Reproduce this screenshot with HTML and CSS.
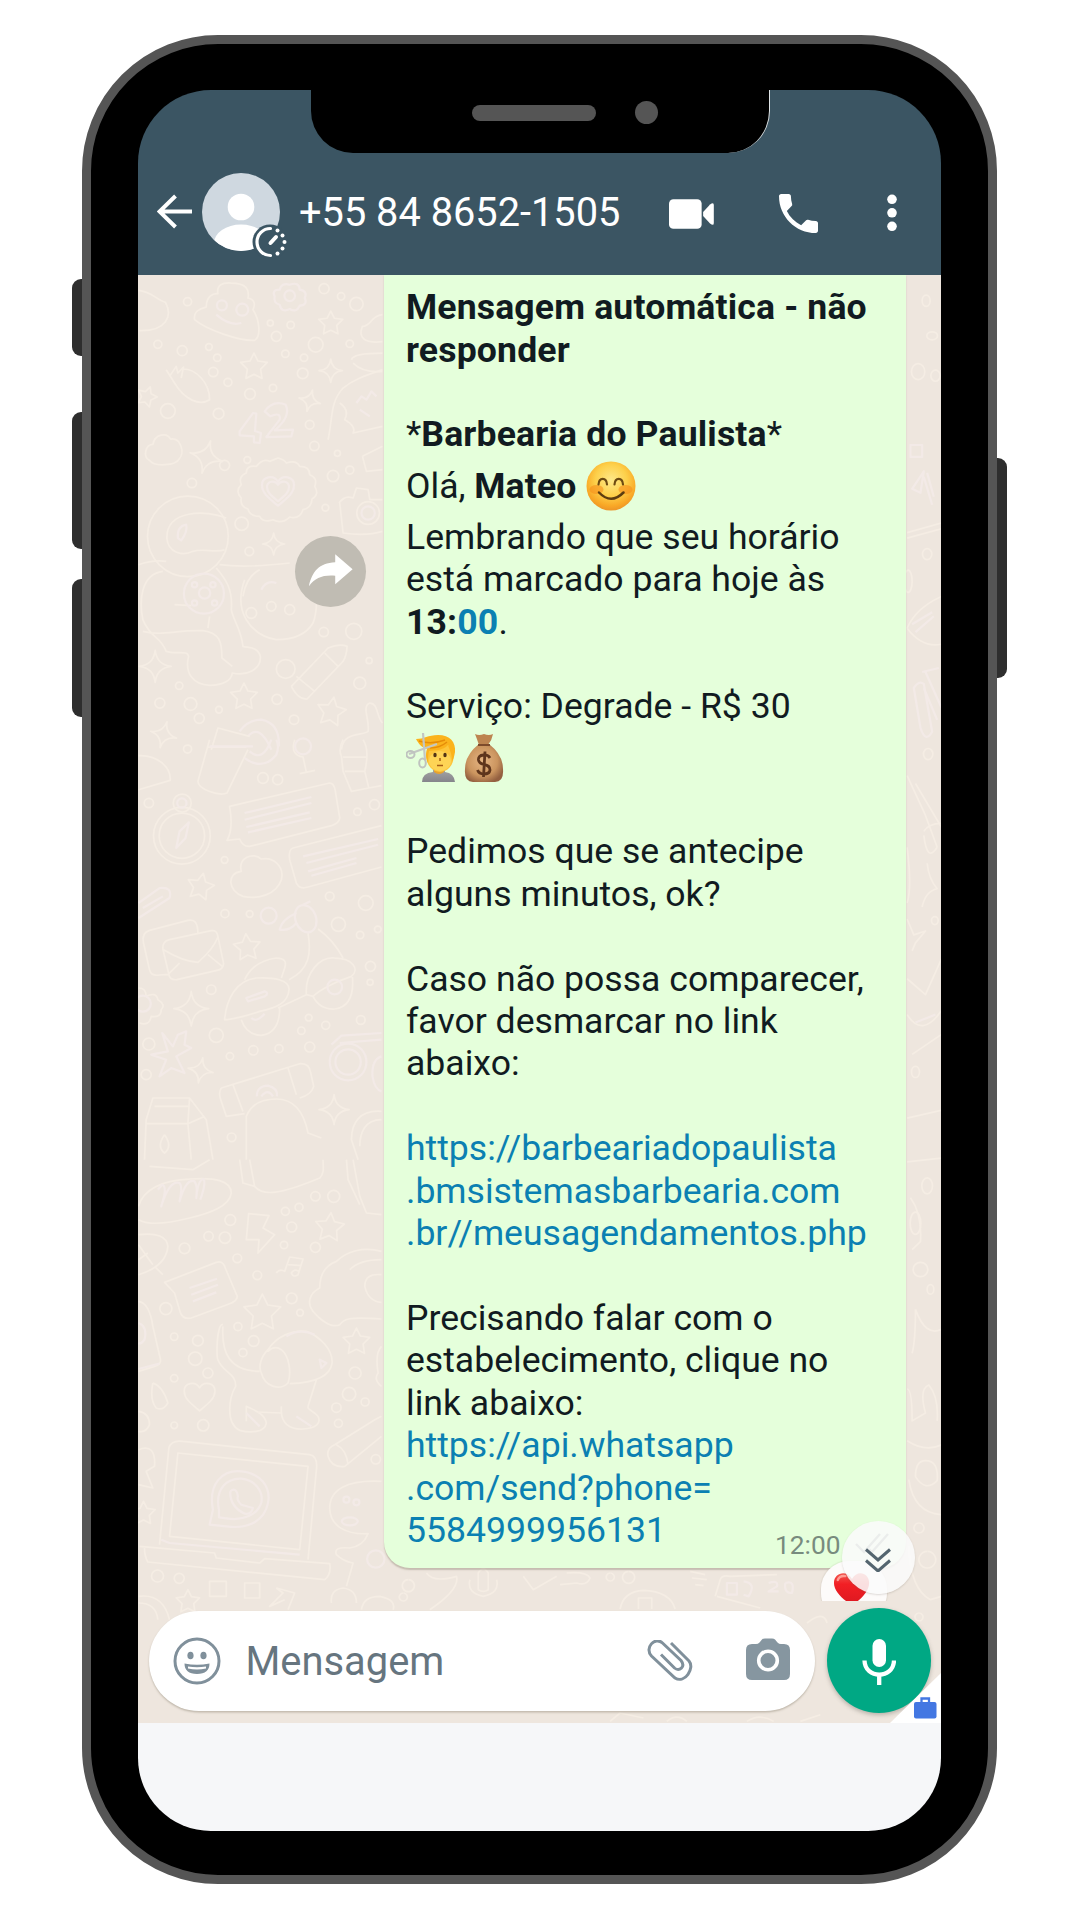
FILE: index.html
```html
<!DOCTYPE html>
<html lang="pt-BR">
<head>
<meta charset="utf-8">
<title>+55 84 8652-1505</title>
<link rel="stylesheet" href="styles.css">
</head>
<body>
<main class="phone">
  <span class="side-key side-key-a"></span>
  <span class="side-key side-key-b"></span>
  <span class="side-key side-key-c"></span>
  <span class="side-key side-key-power"></span>

  <div class="screen">
    <header class="topbar">
      <svg class="back" viewBox="0 0 36 36"><path d="M35 17.500H3M18.500 2 2.500 17.500 18.500 33" fill="none" stroke="#fff" stroke-width="4"/></svg>
      <div class="avatar">
        <svg viewBox="0 0 86 86">
          <defs><clipPath id="av"><circle cx="39" cy="39" r="39"/></clipPath></defs>
          <g clip-path="url(#av)"><rect width="78" height="78" fill="#cfd8e0"/><circle cx="39" cy="34" r="13.300" fill="#fff"/><ellipse cx="39" cy="70" rx="27" ry="18.500" fill="#fff"/></g>
          <circle cx="68" cy="69" r="17.500" fill="#3b5563"/>
          <path d="M68.500 55.500a13.500 13.500 0 1 0 0 27" fill="none" stroke="#fff" stroke-width="3.200" stroke-linecap="round"/>
          <path d="M68.500 70 74 64" stroke="#fff" stroke-width="4" stroke-linecap="round"/>
          <g fill="#fff"><circle cx="75.500" cy="57.500" r="2"/><circle cx="80.500" cy="62.500" r="2"/><circle cx="82.500" cy="69" r="2"/><circle cx="80.500" cy="75.500" r="2"/><circle cx="75.500" cy="80.500" r="2"/></g>
        </svg>
      </div>
      <h1 class="contact">+55 84 8652-1505</h1>
      <svg class="video" viewBox="0 0 46 30"><rect width="33" height="30" rx="4.500" fill="#fff"/><path d="M34.500 13 41.500 5.500Q45.300 2.500 45.300 6V24Q45.300 27.500 41.500 24.500L34.500 17Z" fill="#fff"/></svg>
      <svg class="call" viewBox="3 3 18 18"><path d="M6.620 10.790c1.440 2.830 3.760 5.140 6.590 6.590l2.200-2.200c.27-.27.67-.36 1.020-.24 1.120.37 2.330.57 3.570.57.55 0 1 .45 1 1V20c0 .55-.45 1-1 1-9.390 0-17-7.610-17-17 0-.55.45-1 1-1h3.500c.55 0 1 .45 1 1 0 1.250.2 2.450.57 3.570.11.35.03.74-.25 1.020l-2.200 2.200z" fill="#fff"/></svg>
      <svg class="dots" viewBox="0 0 10 38"><g fill="#fff"><circle cx="5" cy="5.300" r="4.800"/><circle cx="5" cy="18.800" r="4.800"/><circle cx="5" cy="32.300" r="4.800"/></g></svg>
    </header>

    <section class="chat">
      <svg class="wallpaper" viewBox="138.500 275.300 802 1448.700" preserveAspectRatio="none">
        <defs>
          <path id="star" d="M0-10 3-4 10-3 5 2 6 9 0 6-6 9-5 2-10-3-3-4Z"/>
          <path id="spark" d="M0-10Q1-1 10 0Q1 1 0 10Q-1 1-10 0Q-1-1 0-10Z"/>
          <path id="heart" d="M0 9C-6 4-10 1-10-4C-10-9-3-11 0-6C3-11 10-9 10-4C10 1 6 4 0 9Z"/>
          <path id="cloud" d="M-8 6C-12 4-10-3-6-3C-5-9 2-10 4-6C10-7 12 2 9 5C7 9-5 10-8 6Z"/>
        </defs>
        <g transform="translate(60 270) scale(.33333)">
          <path d="M237 62C275 65 290 90 318 98C340 140 320 185 240 183"/>
          <path d="M405 150C400 120 430 115 440 112C440 80 460 70 475 72C470 45 490 38 515 40C560 40 570 60 565 85C590 90 585 110 580 120C600 150 605 200 585 212C540 215 440 180 405 150Z"/>
          <g class="lilac"><circle cx="487" cy="107" r="15"/><circle cx="548" cy="120" r="18"/><path d="M470 135Q510 170 545 160"/><circle cx="690" cy="78" r="16"/><path d="M645 80Q635 60 660 60Q665 38 690 45Q718 35 720 60Q745 65 735 85Q745 105 720 108Q710 130 690 118Q665 130 660 105Q640 100 645 80Z"/></g>
          <use href="#star" transform="translate(813 160) scale(3.600)"/><use href="#star" transform="translate(583 290) scale(4)"/><use href="#star" transform="translate(262 380) rotate(20) scale(3)"/>
          <use href="#spark" transform="translate(813 303) scale(3.500)"/><use href="#spark" transform="translate(750 393) rotate(15) scale(3.300)"/><use href="#spark" transform="translate(440 562) rotate(15) scale(5)"/><use href="#spark" transform="translate(642 823) scale(3.300)"/><use href="#spark" transform="translate(287 1190) scale(4.800)"/><use href="#spark" transform="translate(312 1395) rotate(15) scale(4)"/>
          <path d="M968 135C930 140 935 170 908 170C895 200 910 222 968 216M875 270Q880 250 968 250M880 280Q910 310 968 305"/>
          <path d="M365 298C410 295 450 340 450 390C420 410 375 390 345 340L320 300M330 320 350 290 355 310 372 292 365 325"/>
          <path d="M805 510C820 440 810 400 850 355C880 330 910 320 968 300M840 400Q870 420 855 450Q890 470 880 490L968 470"/>
          <g class="lilac"><path d="M890 400 905 380 920 390 935 365 950 380M900 420 930 440"/><path d="M540 485 580 430 590 432 586 484 604 490 600 520 583 518 583 500 540 497Z"/><path d="M615 425Q640 390 678 405Q695 440 645 482L700 480 695 500 620 502 660 450Q665 425 632 440Z"/></g>
          <use href="#cloud" transform="translate(312 540) scale(5.300)"/>
          <path d="M655 565Q675 570 680 580Q710 570 720 590Q750 590 750 615Q775 625 765 650Q780 675 757 688Q755 715 730 720Q720 750 690 742Q665 765 640 750Q610 760 600 740Q570 740 565 718Q540 710 545 685Q525 665 545 645Q535 620 560 610Q560 585 590 590Q610 565 630 575Z"/>
          <use class="lilac" href="#heart" transform="translate(655 665) scale(4.800)"/><use class="lilac" href="#heart" transform="translate(655 665) scale(3.300)"/>
          <path d="M908 560 968 530M908 560 920 605 968 600M840 700 850 790Q920 800 968 785M838 700Q855 675 880 685L890 655 925 660 930 690H968"/>
          <circle cx="925" cy="730" r="34"/><circle class="lilac" cx="925" cy="730" r="20"/>
          <circle cx="385" cy="800" r="121"/><path d="M500 745C440 720 320 720 322 805C325 850 370 860 400 845C430 835 470 850 495 840"/><path class="lilac" d="M355 805Q352 770 380 765Q385 785 365 812Z"/>
          <path d="M237 885Q280 870 320 875M310 905C240 915 240 1000 250 1050C275 1110 300 1095 320 1145C350 1155 385 1140 387 1160C375 1210 400 1245 450 1247C495 1245 515 1230 518 1210C560 1220 605 1200 602 1160C595 1130 565 1135 550 1130C545 1080 520 1050 515 1020C520 960 500 930 470 895M250 1085C310 1100 350 1080 430 1083C480 1090 487 1115 487 1165L518 1190M345 1005 395 1008M445 1075 450 1040"/>
          <g class="lilac"><circle cx="433" cy="972" r="60"/><circle cx="435" cy="970" r="17"/><circle cx="405" cy="945" r="8"/><circle cx="460" cy="945" r="8"/><circle cx="405" cy="1000" r="8"/><circle cx="465" cy="1000" r="8"/></g>
          <path d="M480 885Q560 895 690 880M555 930Q530 1000 560 1050Q590 1100 650 1110Q730 1110 760 1060Q775 1020 768 960M600 900Q560 920 550 980"/>
          <circle cx="575" cy="1030" r="16"/><circle cx="635" cy="1010" r="14"/><circle cx="690" cy="1020" r="15"/><path class="lilac" d="M605 960Q620 930 650 940"/>
          <path d="M695 1250 805 1135Q840 1120 862 1130Q860 1160 850 1175L742 1288Q715 1290 695 1250M795 1150 835 1190M710 1220 765 1265"/>
          <use href="#star" transform="translate(553 1280) scale(4)"/><use href="#star" transform="translate(815 1325) rotate(10) scale(4.300)"/>
          <path d="M968 1360C950 1340 955 1300 930 1300C905 1310 930 1350 925 1385C905 1400 850 1385 845 1440"/>
          <g class="lilac"><path d="M540 1385Q565 1350 605 1350Q660 1360 658 1430M565 1400Q600 1360 635 1440"/></g><path d="M455 1440 475 1375 570 1400"/>
          <circle cx="890" cy="103" r="20"/><circle cx="793" cy="57" r="15"/><circle cx="844" cy="80" r="11"/><circle cx="384" cy="96" r="12"/><circle cx="295" cy="224" r="12"/><circle cx="368" cy="243" r="15"/><circle cx="448" cy="232" r="10"/><circle cx="473" cy="264" r="11"/><circle cx="461" cy="307" r="14"/><circle cx="505" cy="338" r="12"/><circle cx="571" cy="373" r="16"/><circle cx="640" cy="355" r="11"/><circle cx="650" cy="200" r="15"/><circle cx="632" cy="160" r="9"/><circle cx="693" cy="166" r="11"/><circle cx="768" cy="225" r="22"/><circle cx="677" cy="252" r="11"/><circle cx="733" cy="264" r="11"/><circle cx="729" cy="311" r="16"/><circle cx="870" cy="222" r="11"/><circle cx="325" cy="424" r="22"/><circle cx="477" cy="432" r="16"/><circle cx="750" cy="465" r="13"/><circle cx="764" cy="529" r="14"/><circle cx="563" cy="571" r="10"/><circle cx="495" cy="587" r="15"/><circle cx="397" cy="640" r="14"/><circle cx="870" cy="601" r="12"/><circle cx="820" cy="619" r="17"/><circle cx="833" cy="551" r="9"/><circle cx="546" cy="762" r="20"/><circle cx="797" cy="714" r="10"/><circle cx="569" cy="845" r="13"/><circle cx="792" cy="1087" r="14"/><circle cx="882" cy="1085" r="24"/><circle cx="678" cy="1198" r="28"/><circle cx="900" cy="1240" r="18"/><circle cx="928" cy="1173" r="9"/><circle cx="359" cy="1248" r="11"/><circle cx="301" cy="1300" r="15"/><circle cx="393" cy="1303" r="19"/><circle cx="419" cy="1346" r="15"/><circle cx="478" cy="1320" r="10"/><circle cx="652" cy="1289" r="15"/><circle cx="703" cy="1350" r="14"/>
        </g>
        <g transform="translate(130 740) scale(.33333)">
          <path d="M27 48C80 45 125 80 122 122L27 150"/>
          <path d="M240 0 205 125C205 150 270 170 292 160L355 30M235 22H350M495 0Q480 45 520 52L530 98M510 102 556 92"/>
          <g class="lilac"><path d="M240 20H370M345 55Q400 95 440 45Q450 20 440 0M360 35Q400 70 425 0"/><circle cx="520" cy="20" r="24"/></g>
          <path d="M640 0Q625 30 635 50L640 95 665 155 717 145 705 95Q720 30 700 0M640 52H710M645 95H705M717 145 755 138"/>
          <circle cx="157" cy="288" r="85"/><circle cx="157" cy="288" r="68"/><circle cx="158" cy="190" r="27"/><path class="lilac" d="M150 275 178 248 168 295 140 325Z"/><circle class="lilac" cx="157" cy="190" r="14"/>
          <path d="M300 200 600 130Q612 130 616 150L630 235Q628 250 605 258L360 320Q340 322 330 298L292 302Q312 270 300 200Z"/>
          <path class="lilac" d="M345 220 545 172M345 240 545 190M350 262 540 218M355 278 545 235"/>
          <path d="M755 258 490 325Q475 330 480 360L500 430Q510 450 535 442L755 382"/>
          <path class="lilac" d="M520 350 745 298M530 370 745 315M535 395 680 355M545 408 680 370"/>
          <path d="M335 395C325 355 370 335 395 358C430 350 465 380 455 420C440 465 385 480 340 470C295 455 290 400 335 395Z"/>
          <use href="#star" transform="translate(213 440) rotate(12) scale(4)"/><use href="#star" transform="translate(352 622) rotate(-5) scale(4)"/><use href="#spark" transform="translate(185 807) scale(5.200)"/><use href="#spark" transform="translate(213 992) rotate(10) scale(3.800)"/><use href="#spark" transform="translate(613 1110) scale(4.500)"/>
          <path class="lilac" d="M27 490 90 445Q130 440 120 475L27 535M40 505 100 470"/>
          <path d="M205 582C205 540 190 540 175 542L60 572Q35 580 42 610L60 690Q65 710 90 706L118 704M100 628Q98 605 120 600L245 573Q262 570 265 590L282 672Q280 690 262 692L142 720Q120 722 118 704ZM102 630Q160 665 205 668Q250 630 265 592M118 702 150 670M278 680 235 645"/>
          <path d="M285 840C290 780 320 720 380 715C430 712 480 720 478 750C475 790 440 805 390 815C350 830 300 840 285 840ZM345 720Q370 665 440 655Q475 655 465 685L455 715M478 720C540 690 545 640 535 580M565 568Q610 600 640 655M530 765C525 700 570 650 615 655C670 655 690 690 665 710C620 725 570 750 550 770ZM445 805 530 765M335 840Q350 885 395 887Q450 880 450 805M550 770Q570 810 615 808Q675 800 668 712"/>
          <g class="lilac"><ellipse cx="528" cy="537" rx="31" ry="42" transform="rotate(-20 528 537)"/><path d="M500 520Q455 540 450 570Q480 575 500 550M520 495 542 485"/><path d="M350 775 405 755Q420 760 405 770L355 785Z"/><circle cx="615" cy="742" r="22"/><path d="M365 835Q380 850 405 822"/></g>
          <path d="M27 745Q50 745 50 770Q80 755 85 780Q110 795 95 810Q95 835 65 830Q60 860 30 850"/><circle class="lilac" cx="40" cy="792" r="24"/>
          <path class="lilac" d="M98 880 130 920 145 885 170 875 165 915 185 925 140 950 165 1000 125 985 90 1010 110 960 65 945 115 935Z"/>
          <g class="lilac"><circle cx="655" cy="967" r="55"/><circle cx="655" cy="967" r="38"/><path d="M605 915 635 888 755 880M630 910 755 900M755 950Q725 960 728 1010Q735 1050 755 1055"/></g>
          <path d="M275 1045 510 972Q540 970 543 1000L552 1040Q545 1065 510 1075M275 1045Q265 1060 275 1085L290 1130 345 1122M310 1035 340 1115M475 985 500 1065M350 1260V1130C370 1080 420 1078 440 1078C500 1078 525 1130 535 1180L575 1195"/>
          <path class="lilac" d="M382 1070Q380 1040 415 1038Q445 1045 442 1070M395 1070Q415 1045 430 1070"/>
          <path d="M45 1260 50 1140 70 1075H180L230 1140 250 1260M75 1100H180M50 1152H175L180 1075M175 1152 185 1260M175 1152 225 1130M105 1185Q130 1220 105 1240Q80 1220 105 1185"/>
          <path d="M755 1115C690 1110 665 1150 665 1200L685 1260M755 1140C705 1140 690 1180 690 1220"/>
          <circle cx="174" cy="28" r="12"/><circle cx="400" cy="115" r="16"/><circle cx="444" cy="120" r="15"/><circle cx="58" cy="190" r="14"/><circle cx="683" cy="216" r="11"/><circle cx="734" cy="195" r="15"/><circle cx="285" cy="361" r="10"/><circle cx="600" cy="470" r="13"/><circle cx="708" cy="490" r="22"/><circle cx="626" cy="554" r="21"/><circle cx="691" cy="586" r="11"/><circle cx="744" cy="569" r="10"/><circle cx="286" cy="522" r="12"/><circle cx="360" cy="523" r="10"/><circle class="lilac" cx="417" cy="528" r="24"/><circle cx="245" cy="750" r="14"/><circle cx="260" cy="887" r="21"/><circle cx="537" cy="834" r="10"/><circle cx="588" cy="857" r="12"/><circle cx="515" cy="873" r="11"/><circle cx="693" cy="841" r="13"/><circle cx="722" cy="680" r="15"/><circle cx="721" cy="728" r="9"/><circle cx="540" cy="922" r="15"/><circle cx="448" cy="927" r="12"/><circle cx="371" cy="932" r="14"/><circle cx="301" cy="950" r="11"/><circle cx="58" cy="913" r="18"/><circle cx="50" cy="1005" r="15"/><circle cx="306" cy="1193" r="13"/>
        </g>
        <g transform="translate(130 1160) scale(.33333)">
          <path d="M60 20 190 30 240 0M330 0 340 70 375 80M360 0 375 80C400 110 450 105 570 55C585 40 580 20 580 0M650 0 655 60 690 135M670 0 690 110 710 160 755 165"/>
          <path d="M27 140C40 90 100 60 180 58C260 52 305 65 305 100C300 140 240 160 180 175C120 190 60 200 27 180"/>
          <path class="lilac" d="M85 90 98 75Q115 80 95 140Q120 60 150 70Q160 80 150 125Q170 55 195 65Q205 80 200 115 205 60 222 58Q230 70 212 120"/>
          <path d="M357 162 418 168 400 205 435 225 385 280 388 240 350 240Z"/>
          <use href="#star" transform="translate(600 202) rotate(5) scale(4.300)"/><use href="#star" transform="translate(398 458) scale(5.500)"/><use href="#star" transform="translate(680 545) scale(4)"/><use href="#star" transform="translate(42 1060) scale(3.500)"/><use href="#star" transform="translate(175 1325) scale(3.500)"/>
          <path d="M27 225Q110 215 115 260Q110 320 27 345M75 320 100 345M27 255 70 315M27 300 55 280"/>
          <path d="M105 368 260 308Q280 302 287 325L323 410Q322 425 300 432L185 475Q160 480 152 458L135 400Z"/>
          <path class="lilac" d="M180 385 262 357M185 405 265 375M190 425 260 398"/>
          <path d="M440 340Q450 325 465 335L480 292 520 298 505 345Q490 355 485 340Q495 325 507 335M475 315 515 318"/>
          <path d="M755 275C700 260 650 275 620 305C580 320 570 350 570 385C540 400 530 430 550 455C580 490 610 505 630 495C640 480 650 470 755 478M660 330Q690 300 755 300M755 345Q705 340 705 380Q715 425 755 428"/>
          <path d="M27 425Q60 430 70 500L93 600Q95 615 75 620L27 635"/><path class="lilac" d="M27 490Q55 500 45 540 35 555 27 550M27 628 90 612"/>
          <path d="M280 495C260 490 260 600 265 600C280 640 320 640 318 680C300 710 285 790 330 812C360 820 405 820 410 790C405 760 370 750 350 740V785M280 500C275 580 300 635 390 635M380 757 455 760V740M455 755C455 790 480 810 520 808C560 805 575 790 565 770C555 755 530 750 535 740L560 660M480 672C530 670 600 660 607 610C610 570 570 530 530 515C490 510 440 530 415 570C395 590 385 620 395 640C405 680 450 695 475 670C485 640 480 590 455 570C440 560 425 565 415 575"/>
          <path class="lilac" d="M470 530Q510 505 555 525M570 600 590 610 575 625ZM350 760 390 800M500 770 545 800"/>
          <use href="#heart" transform="translate(210 712) scale(4.600)"/><path d="M70 670Q100 680 115 730Q100 755 80 745Q60 720 70 670M27 755Q60 760 60 795Q50 820 27 815M755 560Q735 580 745 640 730 660 755 680"/>
          <path d="M90 1155 118 865Q125 840 160 845L540 885Q565 890 560 930L535 1200M120 1130 145 880 535 920 510 1170ZM30 1160 255 1180 260 1195 390 1210 405 1197 600 1212Q605 1245 585 1260L55 1207Q45 1190 45 1165"/>
          <path class="lilac" d="M240 1095 250 1050C235 970 280 930 335 935C390 940 425 980 415 1030C405 1080 360 1110 290 1100ZM268 1073 268 1050C255 985 295 955 335 957C375 960 402 995 395 1028C385 1065 340 1085 290 1076ZM302 995Q320 980 325 1010 320 1020 335 1035L370 1045Q365 1065 345 1062Q300 1040 302 995M95 1140 120 1150 510 1185"/>
          <path d="M595 890Q590 865 615 855L735 780 755 770M595 890Q605 925 645 920L755 830M620 855Q650 870 655 915M27 870Q80 850 75 920L50 935 70 985 27 975"/>
          <path d="M755 965C650 960 600 990 600 1045C600 1100 650 1125 715 1122Q700 1160 660 1165Q610 1160 620 1185Q640 1205 670 1210L650 1280"/><circle class="lilac" cx="650" cy="1020" r="9"/><circle class="lilac" cx="680" cy="1028" r="9"/><ellipse class="lilac" cx="660" cy="1085" rx="24" ry="12"/><circle class="lilac" cx="738" cy="1198" r="26"/>
          <path d="M240 1265H290V1310H240ZM345 1270H390V1315H345ZM440 1285 495 1300 475 1350M440 1285 460 1300 420 1340 465 1320M605 1330Q600 1290 640 1285Q680 1290 680 1330M695 1350Q700 1310 750 1310Q800 1320 790 1350M27 1310Q100 1300 120 1380M27 1330Q80 1330 85 1380M820 1300A12 12 0 1 0 821 1300M835 1260A18 18 0 1 0 836 1260M890 1240Q910 1270 980 1250Q990 1290 900 1350M1020 1260Q1010 1300 1060 1310Q1110 1300 1100 1260M1045 1290V1240Q1060 1215 1075 1240V1290Q1060 1300 1045 1290M1180 1250 1210 1290 1280 1250"/>
          <circle cx="557" cy="110" r="14"/><circle cx="612" cy="110" r="18"/><circle cx="508" cy="143" r="12"/><circle cx="467" cy="155" r="12"/><circle cx="486" cy="202" r="15"/><circle cx="463" cy="256" r="11"/><circle cx="302" cy="181" r="16"/><circle cx="237" cy="230" r="14"/><circle cx="286" cy="234" r="17"/><circle cx="165" cy="266" r="16"/><circle cx="323" cy="296" r="13"/><circle cx="383" cy="347" r="13"/><circle cx="557" cy="263" r="15"/><circle cx="486" cy="416" r="16"/><circle cx="511" cy="459" r="10"/><circle cx="109" cy="447" r="18"/><circle cx="325" cy="501" r="12"/><circle cx="372" cy="544" r="16"/><circle cx="340" cy="579" r="12"/><circle cx="205" cy="543" r="16"/><circle cx="134" cy="531" r="11"/><circle cx="197" cy="597" r="20"/><circle cx="235" cy="640" r="15"/><circle cx="134" cy="656" r="11"/><circle cx="221" cy="797" r="17"/><circle cx="134" cy="797" r="10"/><circle cx="676" cy="640" r="18"/><circle cx="658" cy="703" r="20"/><circle cx="706" cy="727" r="12"/><circle cx="620" cy="744" r="14"/><circle cx="626" cy="791" r="12"/><circle cx="738" cy="899" r="14"/><circle cx="84" cy="1249" r="18"/><circle cx="149" cy="1256" r="15"/>
        </g>
        <g transform="translate(895 274) scale(.33333 .33333)">
          <g transform="scale(1 2.39)">
          <path d="M35 325 138 313M35 332 138 320M35 445Q60 420 138 405M35 445Q80 470 138 465M35 630 90 680 125 720M60 640 138 695M85 700Q100 690 138 690M85 705Q95 740 125 720M35 720Q50 770 35 790M80 795Q90 775 125 772Q100 760 95 740M35 810 55 830 90 825 60 840 50 850M35 885 90 905 138 860M35 930Q80 960 138 925M50 980 138 955M35 1060 138 1050M35 1115 138 1110M45 1160Q80 1180 75 1215L50 1225M60 1300Q60 1340 50 1355M60 1300Q90 1335 138 1325M35 1400Q50 1400 50 1440L90 1430Q70 1400 100 1395 130 1410 125 1440M35 1465Q90 1480 138 1470M60 1510Q60 1490 90 1490 130 1490 125 1515Q90 1530 60 1510"/>
          <path class="lilac" d="M55 520Q70 510 85 515L110 575Q90 590 75 570ZM80 500 130 495M85 520 125 560M90 500 138 545M45 215H80V230H45ZM50 270 85 248 75 275ZM85 255 110 290M95 250 115 280M50 440 110 425M60 450 115 430M60 940 120 930"/>
          <ellipse cx="92" cy="34" rx="12" ry="7"/><ellipse cx="68" cy="123" rx="20" ry="10"/><ellipse cx="120" cy="128" rx="14" ry="7"/><ellipse cx="110" cy="78" rx="16" ry="5"/><ellipse cx="95" cy="352" rx="14" ry="7"/><ellipse cx="38" cy="386" rx="12" ry="14"/><ellipse cx="98" cy="603" rx="14" ry="7"/><ellipse cx="118" cy="812" rx="10" ry="5"/><ellipse cx="60" cy="1002" rx="12" ry="7"/><ellipse cx="95" cy="1145" rx="16" ry="10"/><ellipse cx="75" cy="1250" rx="22" ry="9"/><ellipse cx="105" cy="1275" rx="10" ry="6"/><ellipse cx="60" cy="1192" rx="16" ry="14"/>
          </g>
        </g>
        <g transform="translate(560 1480) scale(.33333)">
          <path d="M20 280Q80 275 90 295Q80 320 50 310L0 315M150 280A12 12 0 1 0 151 280M205 275A18 18 0 1 0 206 275M390 275 435 285M395 295 440 300M405 315 430 318M180 388Q190 335 250 332 330 335 345 388M235 388V355H275V388M465 350 480 300Q485 285 510 290L650 285M470 350 600 385M740 430Q790 390 800 430M1045 200Q1050 330 1110 360L1143 350M1100 215A25 25 0 1 0 1101 215M1045 0Q1060 100 1143 105M1075 130A15 15 0 1 0 1076 130M1075 400A12 12 0 1 0 1076 400M150 725 180 700 250 715M320 725Q350 700 380 725M560 725Q600 700 640 725M720 725 780 705"/>
          <path class="lilac" d="M500 310H530V345H500ZM550 305Q590 310 565 350L550 345M625 310Q655 300 650 320L625 335H655M675 310Q705 300 695 340Q670 340 675 310"/>
        </g>
      </svg>

      <div class="messages">
        <button class="forward" aria-label="Encaminhar"><svg viewBox="0 0 72 72"><path d="M14 50.500C17.500 35.500 24 27.500 40.500 26.500V18.500L58 33.500 40.500 48.500V40C28 39 20.500 42 14 50.500Z" fill="#fff"/></svg></button>
        <article class="bubble">
          <p class="line"><b>Mensagem automática - não</b></p>
          <p class="line"><b>responder</b></p>
          <p class="line"></p>
          <p class="line">*<b>Barbearia do Paulista</b>*</p>
          <p class="line with-emoji"><span>Olá, <b>Mateo</b> </span>
            <svg class="emoji" viewBox="0 0 50 50"><defs><radialGradient id="face" cx=".5" cy=".38" r=".64"><stop offset="0" stop-color="#fee88a"/><stop offset=".5" stop-color="#fdd04a"/><stop offset=".82" stop-color="#f9a826"/><stop offset="1" stop-color="#ea9128"/></radialGradient></defs><circle cx="25" cy="25" r="24.500" fill="url(#face)"/><ellipse cx="10.500" cy="28.500" rx="7" ry="4.500" fill="#f7901c" opacity=".6"/><ellipse cx="39.500" cy="28.500" rx="7" ry="4.500" fill="#f7901c" opacity=".6"/><path d="M12.500 23.500C13 16 20.500 16 21 23.500M28.500 23.500C29 16 36.500 16 37 23.500" fill="none" stroke="#6d4a12" stroke-width="2.200" stroke-linecap="round"/><path d="M13 31.500Q25 44 37.500 31.500" fill="none" stroke="#5c3d10" stroke-width="2.500" stroke-linecap="round"/></svg>
          </p>
          <p class="line">Lembrando que seu horário</p>
          <p class="line">está marcado para hoje às</p>
          <p class="line"><b>13:<a>00</a></b>.</p>
          <p class="line"></p>
          <p class="line">Serviço: Degrade - R$ 30</p>
          <p class="line with-emoji">
            <svg class="emoji" viewBox="0 0 50 50"><defs><linearGradient id="shirt" x2="0" y2="1"><stop offset="0" stop-color="#aaa"/><stop offset="1" stop-color="#85858b"/></linearGradient></defs>
              <path d="M16 49Q16 40 27 39V34H39V39Q48 40 49 49Z" fill="url(#shirt)"/><path d="M28 33H38V39Q33 43 28 39Z" fill="#e8a32d"/>
              <ellipse cx="34" cy="24" rx="13.500" ry="15" fill="#fdc63c"/><ellipse cx="34" cy="28" rx="11" ry="10" fill="#fed455"/>
              <path d="M10 6C18 6 22 2 32 2C44 2 50 9 49 19C48 25 47 27 46 28C46 20 43 16 42 12C37 18 28 17 23 18C22 22 22 28 22 30C19 24 20 19 21 16C16 15 12 10 10 6Z" fill="#fbb31c"/><path d="M13 8Q25 12 39 7M24 15Q34 15 41 9" stroke="#e68d08" stroke-width="1.400" fill="none"/>
              <ellipse cx="29" cy="22" rx="1.700" ry="2.200" fill="#513314"/><ellipse cx="39" cy="22" rx="1.700" ry="2.200" fill="#513314"/><path d="M31 32.500H37M34 25V28" stroke="#a65d14" stroke-width="1.500" fill="none"/>
              <path d="M17 0 19 27M3 21 31 11" stroke="#c3c7c3" stroke-width="2.200"/><g fill="none" stroke="#bfc3bf" stroke-width="2"><ellipse cx="4.500" cy="21.500" rx="4" ry="3.400"/><ellipse cx="16.500" cy="30" rx="3.300" ry="4.600"/></g></svg>
            <svg class="emoji bag" viewBox="0 0 50 50"><defs><radialGradient id="bag" cx=".46" cy=".45" r=".6"><stop offset="0" stop-color="#e5b583"/><stop offset=".65" stop-color="#cb955f"/><stop offset="1" stop-color="#946040"/></radialGradient></defs><path d="M16 1Q20 3 25 1Q30 3 34 1Q33 7 29 12H20Q18 6 16 1Z" fill="#bd8450"/><path d="M20 11H30Q44 22 44 36Q45 49 36 49H14Q5 49 6 36Q6 22 20 11Z" fill="url(#bag)"/><path d="M19 12H31" stroke="#7d4b2c" stroke-width="2"/><path d="M31 25Q29 21.500 24.500 22Q19 22.500 19.500 27Q20 30.500 25 31.500Q31 32.500 31 37Q30.500 41 25 41Q20 41 18.500 37M26 18.500 24.500 44" stroke="#5e351c" stroke-width="2.800" fill="none"/></svg>
          </p>
          <p class="line"></p>
          <p class="line">Pedimos que se antecipe</p>
          <p class="line">alguns minutos, ok?</p>
          <p class="line"></p>
          <p class="line">Caso não possa comparecer,</p>
          <p class="line">favor desmarcar no link</p>
          <p class="line">abaixo:</p>
          <p class="line"></p>
          <p class="line"><a>https://barbeariadopaulista</a></p>
          <p class="line"><a>.bmsistemasbarbearia.com</a></p>
          <p class="line"><a>.br//meusagendamentos.php</a></p>
          <p class="line"></p>
          <p class="line">Precisando falar com o</p>
          <p class="line">estabelecimento, clique no</p>
          <p class="line">link abaixo:</p>
          <p class="line"><a>https://api.whatsapp</a></p>
          <p class="line"><a>.com/send?phone=</a></p>
          <p class="line last"><a>5584999956131</a><span class="meta"><time>12:00</time><svg class="ticks" viewBox="0 0 36 24"><path d="M1 13 9 21 25 3M14 18 17 21 33 3" fill="none" stroke="#7d8f83" stroke-width="2.400"/></svg></span></p>
          <span class="reaction"><svg viewBox="0 0 40 36"><defs><linearGradient id="hrt" x2="0" y2="1"><stop offset="0" stop-color="#f2564f"/><stop offset=".35" stop-color="#f21f24"/><stop offset="1" stop-color="#dc1820"/></linearGradient></defs><path d="M20 35C12 31 1 22 1 12C1 1 15-2 20 8C25-2 38 1 38 12C38 22 28 31 20 35Z" fill="url(#hrt)"/><path d="M5 9Q7 4 13 5" stroke="#ff9d94" stroke-width="2.500" fill="none" stroke-linecap="round"/></svg></span>
        </article>
        <button class="to-bottom" aria-label="Ir para o fim"><svg viewBox="0 0 26 24"><path d="M1 1.500 13 12 25 1.500M1 12.500 13 23 25 12.500" fill="none" stroke="#54656f" stroke-width="3"/></svg></button>
      </div>

      <footer class="composer">
        <div class="field">
          <svg class="smile" viewBox="0 0 48 48"><g fill="none" stroke="#80909b" stroke-width="3"><circle cx="24" cy="24" r="22"/></g><g fill="#80909b"><ellipse cx="17.500" cy="18.500" rx="3.100" ry="3.800"/><ellipse cx="30.500" cy="18.500" rx="3.100" ry="3.800"/><path d="M11.500 26.500Q24 29 36.500 26.500Q36.500 36.800 24 37Q11.500 36.800 11.500 26.500Z"/></g><path d="M15 29.500Q24 31 33 29.500V31.500Q24 33.500 15 31.500Z" fill="#fff"/></svg>
          <span class="placeholder">Mensagem</span>
          <svg class="clip" viewBox="0 0 46 41"><path d="M24 3 42 21C48 28 38 44 28 38L4.500 16C-3 8 8-4 15.500 3L34 20.500C39 27 32 32 27.500 28L14 14.500" fill="none" stroke="#80909b" stroke-width="3"/></svg>
          <svg class="camera" viewBox="0 0 44 42"><path d="M6 6H10Q12 6 13.500 4.500L16 1.500Q17 .5 19 .5H26Q28 .5 29 1.500L31.500 4.500Q33 6 35 6H38Q44 6 44 12V36Q44 42 38 42H6Q0 42 0 36V12Q0 6 6 6Z" fill="#8696a0"/><circle cx="22" cy="22.500" r="9.300" fill="#8696a0" stroke="#fff" stroke-width="3.600"/></svg>
        </div>
        <button class="mic" aria-label="Gravar"><svg viewBox="0 0 34 46"><rect x="10.500" width="13.500" height="28" rx="6.750" fill="#fff"/><path d="M2.500 21.500C3 40.500 31.500 40.500 32 21.500M17.200 35V46" fill="none" stroke="#fff" stroke-width="4.300"/></svg></button>
      </footer>
      <svg class="work-corner" viewBox="0 0 51 50"><path d="M0 50 51 0V50Z" fill="#fff"/><rect x="24" y="29" width="22.500" height="16.500" rx="2" fill="#4377e2"/><path d="M31.500 29V25.500H39V29" fill="none" stroke="#4377e2" stroke-width="2.300"/></svg>
    </section>

    <div class="navbar"></div>
    <div class="notch"><span class="speaker"></span><span class="lens"></span></div>
  </div>
</main>
</body>
</html>
```
FILE: styles.css
```css
* { box-sizing: border-box; }
body {
  margin: 0;
  width: 1080px;
  height: 1920px;
  overflow: hidden;
  background: #fff;
  font-family: Roboto, "Liberation Sans", sans-serif;
}
h1, p { margin: 0; font-weight: 400; }
svg { display: block; flex: none; }
button { border: 0; padding: 0; display: flex; align-items: center; justify-content: center; }
b { font-weight: 700; letter-spacing: .15px; }

/* Device frame */
.phone {
  position: relative;
  width: 914.500px;
  height: 1849.500px;
  margin: 34.500px 0 0 82px;
  border: 9.500px solid #555;
  border-radius: 136px;
  background: #000;
  padding: 46px 46.500px 43.500px 47px;
}
.side-key {
  position: absolute;
  left: -19.500px;
  width: 10px;
  background: #2e2e2e;
  border-radius: 9px 0 0 9px;
}
.side-key-a { top: 235px; height: 77px; }
.side-key-b { top: 368px; height: 137px; }
.side-key-c { top: 535px; height: 138px; }
.side-key-power { left: auto; right: -19px; top: 414px; height: 220px; border-radius: 0 9px 9px 0; }
.screen {
  position: relative;
  height: 1741px;
  border-radius: 73px;
  overflow: hidden;
  display: flex;
  flex-direction: column;
}
.notch {
  position: absolute;
  left: 172.500px;
  top: -1px;
  width: 459px;
  height: 64px;
  background: #000;
  border-right: 1px solid #dfe4e6;
  border-radius: 0 0 42px 42px;
}
.speaker { position: absolute; left: 161px; top: 16px; width: 124px; height: 16px; border-radius: 8px; background: #555; }
.lens { position: absolute; left: 324px; top: 12.500px; width: 23px; height: 23px; border-radius: 50%; background: #555; }

/* Header */
.topbar {
  height: 185.300px;
  flex: none;
  background: #3b5563;
  color: #fff;
  display: flex;
  align-items: center;
  padding: 63px 0 3.300px 19px;
}
.back { width: 36px; height: 36px; }
.avatar { width: 78px; height: 78px; margin-left: 8.500px; }
.avatar svg { width: 86px; height: 86px; }
.contact { font-size: 39.750px; line-height: 46px; margin-left: 19.500px; padding-top: 1px; width: 322px; white-space: nowrap; }
.video { width: 45.500px; height: 30px; margin: 3px 0 0 48px; }
.call { width: 39px; height: 39px; margin: 3px 0 0 64.500px; }
.dots { width: 10px; height: 38px; margin: 2px 0 0 69px; }

/* Conversation */
.chat {
  position: relative;
  height: 1448.700px;
  flex: none;
  background: #eee6de;
  display: flex;
  flex-direction: column;
}
.wallpaper { position: absolute; inset: 0; width: 100%; height: 100%; fill: none; stroke: #f5ede4; stroke-width: 1.700px; stroke-linejoin: round; }
.wallpaper * { vector-effect: non-scaling-stroke; }
.wallpaper .lilac { stroke: #f3eae7; stroke-width: 2.200px; }
.messages {
  position: relative;
  height: 1326.700px;
  overflow: hidden;
  display: flex;
  justify-content: flex-end;
  align-items: flex-start;
  padding-right: 35.500px;
}
.forward {
  width: 71.500px;
  height: 71.500px;
  border-radius: 50%;
  background: #c0bcb3;
  margin: 261.200px 18px 0 0;
}
.forward svg { width: 71.500px; height: 71.500px; }
.bubble {
  position: relative;
  width: 521.500px;
  height: 1293.200px;
  padding: 11.300px 0 0 22px;
  background: #e5ffdb;
  border-radius: 0 0 26px 26px;
  box-shadow: 0 1.500px 1.500px rgba(120, 110, 90, .35);
  color: #111b21;
  font-size: 35.600px;
}
.line { height: 42.430px; line-height: 42.430px; white-space: pre; }
.line a { color: #0b80b2; }
.with-emoji { height: 60px; display: flex; align-items: center; white-space: normal; }
.with-emoji span { white-space: pre; line-height: 60px; }
.emoji { width: 50px; height: 50px; margin-left: 1px; }
.emoji:first-child { margin-left: 0; }
.emoji.bag { margin-left: 3px; }
.last { display: flex; justify-content: space-between; }
.meta { display: flex; padding: 15px 15px 0 0; color: #788b7e; font-size: 26.300px; line-height: 42px; gap: 14px; }
.ticks { width: 36px; height: 24px; margin-top: 7px; }
.reaction {
  position: absolute;
  left: 437px;
  top: 1286.500px;
  width: 66px;
  height: 60px;
  border-radius: 28px;
  background: #fdfbfa;
  box-shadow: 0 0 1px 1px rgba(120, 110, 90, .1);
  padding: 9.500px 0 0 11.500px;
}
.reaction svg { width: 38px; height: 35px; }
.to-bottom {
  position: absolute;
  left: 703.500px;
  top: 1246.500px;
  width: 73px;
  height: 73px;
  border-radius: 50%;
  background: rgba(251, 250, 250, .88);
  box-shadow: 0 1px 2px rgba(100, 90, 80, .22);
}
.to-bottom svg { width: 26px; height: 24px; margin-top: 4px; }

/* Composer */
.composer { position: relative; display: flex; align-items: center; height: 122px; padding: 0 9.500px 3px 11px; gap: 12px; }
.field {
  width: 665.500px;
  height: 100.500px;
  border-radius: 50px;
  background: #fff;
  box-shadow: 0 1.500px 2px rgba(110, 100, 80, .35);
  display: flex;
  align-items: center;
  padding-left: 23.500px;
}
.smile { width: 48px; height: 48px; margin-top: 1px; }
.placeholder { font-size: 39.900px; line-height: 46px; color: #66757f; margin-left: 25px; width: 401.500px; padding-top: 2px; }
.clip { width: 46px; height: 41px; }
.camera { width: 44px; height: 42px; margin: 0 0 3px 52.500px; }
.mic { width: 104.500px; height: 105px; border-radius: 50%; background: #00a884; box-shadow: 0 2px 4px rgba(80, 80, 70, .35); flex: none; }
.mic svg { width: 34px; height: 46px; margin-top: 2px; }
.work-corner { position: absolute; right: 0; bottom: 0; width: 51px; height: 50px; }
.navbar { flex: 1; background: #f6f7f9; }
```
